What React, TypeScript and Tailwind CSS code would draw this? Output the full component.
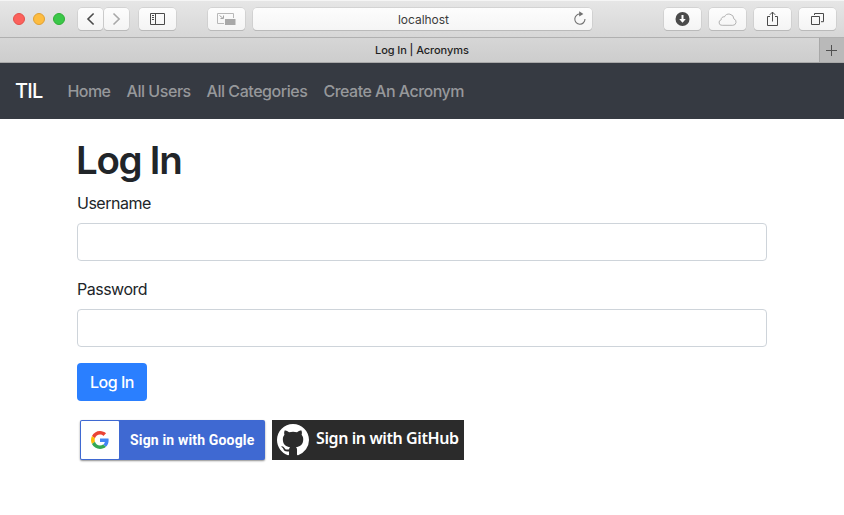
import type { ReactNode } from 'react';

function ToolButton({ children, className = '' }: { children?: ReactNode; className?: string }) {
  return (
    <button
      className={`flex h-[22px] items-center justify-center rounded-[4px] bg-linear-to-b from-[#fdfdfd] to-[#f4f4f4] shadow-[0_0_0_0.5px_#c4c4c4,0_1px_0.5px_#b0b0b0] ${className}`}
    >
      {children}
    </button>
  );
}

function Toolbar() {
  return (
    <header className="flex h-[38px] items-start border-t border-b border-t-[#f5f5f5] border-b-[#b0b0b0] bg-linear-to-b from-[#e6e6e6] to-[#d7d7d7] pt-[7px] pl-[13px]">
      <div className="flex h-[22px] items-center gap-2">
        <span className="size-3 rounded-full border border-[#e2514b] bg-[#fc615c]" />
        <span className="size-3 rounded-full border border-[#dea034] bg-[#fdbc40]" />
        <span className="size-3 rounded-full border border-[#2fae35] bg-[#3ac748]" />
      </div>
      <ToolButton className="ml-[13px] w-[25px]">
        <svg width="25" height="22" fill="none" stroke="#4a4a4a" strokeWidth="1.6">
          <path d="M15.6 5.5 10 11l5.6 5.5" />
        </svg>
      </ToolButton>
      <ToolButton className="ml-px w-[25px]">
        <svg width="25" height="22" fill="none" stroke="#a8a8a8" strokeWidth="1.6">
          <path d="m9.5 5.5 5.6 5.5-5.6 5.5" />
        </svg>
      </ToolButton>
      <ToolButton className="ml-[10px] w-[37px]">
        <svg width="15" height="12" fill="none" stroke="#4a4a4a">
          <path d="M.5.5h14v11H.5zM5.5.5v11M2 2.5h2M2 4.5h2M2 6.5h2" />
        </svg>
      </ToolButton>
      <ToolButton className="ml-8 w-[37px]">
        <svg width="19" height="12" fill="none" stroke="#b8b8b8">
          <path d="M7 10.5H.5V.5h16V5" />
          <path d="M2.5 2.5 5.8 5M3.5 5.5h3v-3" stroke="#a4a4a4" />
          <path d="M8 6h10.5v6H8z" fill="#a8a8a8" stroke="none" />
        </svg>
      </ToolButton>
      <div className="ml-2 flex h-[22px] w-[339px] items-center rounded-[4px] bg-linear-to-b from-[#fdfdfd] to-[#f5f5f5] pl-[145px] shadow-[0_0_0_0.5px_#c4c4c4,0_1px_0.5px_#b0b0b0]">
        <span className="w-[52px] pt-px text-[12px] leading-[22px] tracking-[-0.04px] whitespace-nowrap text-[#3c3c3c]">localhost</span>
        <svg width="14" height="16" className="ml-[123px]" fill="none" stroke="#707070" strokeWidth="1.1">
          <path d="M7.2 3A5.1 5.1 0 1 0 12 8.1" />
          <path d="M6.2.2 10.4 3 6.2 5.6z" fill="#707070" stroke="none" />
        </svg>
      </div>
      <div className="ml-[72px] flex gap-2">
        <ToolButton className="w-[37px]">
          <svg width="15" height="14">
            <circle cx="7.5" cy="7" r="7" fill="#4b4b4b" />
            <path d="M6.5 3h2v4h2.3L7.5 10.8 4.2 7h2.3z" fill="#fff" />
          </svg>
        </ToolButton>
        <ToolButton className="w-[37px]">
          <svg width="19" height="13" fill="none" stroke="#b2b2b2">
            <path d="M4.2 12.3h10.6a3.3 3.3 0 0 0 1.1-6.4A5 5 0 0 0 6.4 3.9 2.6 2.6 0 0 0 3.2 6.8a2.8 2.8 0 0 0 1 5.5Z" />
          </svg>
        </ToolButton>
        <ToolButton className="w-[37px]">
          <svg width="13" height="16" fill="none" stroke="#4a4a4a" className="-mt-px">
            <path d="M4 5.5H1.5v9h10v-9H9M6.5 10.5V1.2M3.8 3.8l2.7-2.7 2.7 2.7" />
          </svg>
        </ToolButton>
        <ToolButton className="w-[37px]">
          <svg width="13" height="12" fill="none" stroke="#4a4a4a">
            <path d="M.5 3.5h8v8h-8zM3.5 2V.5h9v8.2H10" />
          </svg>
        </ToolButton>
      </div>
    </header>
  );
}

function TabBar() {
  return (
    <div className="flex h-[25px] border-b border-b-[#a9a9a9] bg-linear-to-b from-[#d6d6d6] to-[#cdcdcd]">
      <div className="flex flex-1 pl-[375px]">
        <span className="text-[11px] leading-6 font-medium tracking-[-0.08px] text-[#1f1f1f]">Log In | Acronyms</span>
      </div>
      <button className="flex w-[25px] items-center justify-center border-l border-l-[#a8a8a8] bg-[#b9b9b9] pr-px">
        <svg width="11" height="11" stroke="#505050">
          <path d="M5.5 0v11M0 5.5h11" />
        </svg>
      </button>
    </div>
  );
}

function NavBar() {
  return (
    <nav className="flex h-14 items-center bg-[#363a42] pl-[15px] whitespace-nowrap">
      <a className="w-[52.5px] text-[20px] leading-[30px] font-medium tracking-[-0.7px] text-white">TIL</a>
      <div className="flex text-[16px] leading-6 font-medium text-[#96989b]">
        <a className="w-[59px] tracking-[-0.6px]">Home</a>
        <a className="w-20 tracking-[-0.45px]">All Users</a>
        <a className="w-[117px] tracking-[-0.45px]">All Categories</a>
        <a className="tracking-[-0.52px]">Create An Acronym</a>
      </div>
    </nav>
  );
}

function Field({ label, type }: { label: string; type: string }) {
  return (
    <div className="mb-4">
      <label className="mb-2 block text-[16px] leading-6 tracking-[-0.5px]">{label}</label>
      <input type={type} className="block h-[38px] w-full rounded-[4px] border border-[#ced4da] bg-white px-3" />
    </div>
  );
}

function GoogleButton() {
  return (
    <button className="flex h-10 w-[185px] items-center rounded-[2px] bg-[#3f69d2] p-px shadow-[0_1px_2px_rgba(0,0,0,0.45)]">
      <span className="flex h-[38px] w-[38px] items-center justify-center rounded-[1px] bg-white">
        <svg width="18" height="18" viewBox="0 0 48 48">
          <path fill="#EA4335" d="M24 9.5c3.54 0 6.71 1.22 9.21 3.6l6.85-6.85C35.9 2.38 30.47 0 24 0 14.62 0 6.51 5.38 2.56 13.22l7.98 6.19C12.43 13.72 17.74 9.5 24 9.5z" />
          <path fill="#4285F4" d="M46.98 24.55c0-1.57-.15-3.09-.38-4.55H24v9.02h12.94c-.58 2.96-2.26 5.48-4.78 7.18l7.73 6c4.51-4.18 7.09-10.36 7.09-17.65z" />
          <path fill="#FBBC05" d="M10.53 28.59c-.48-1.45-.76-2.99-.76-4.59s.27-3.14.76-4.59l-7.98-6.19C.92 16.46 0 20.12 0 24c0 3.88.92 7.54 2.56 10.78l7.97-6.19z" />
          <path fill="#34A853" d="M24 48c6.48 0 11.93-2.13 15.89-5.81l-7.73-6c-2.15 1.45-4.92 2.3-8.16 2.3-6.26 0-11.57-4.22-13.47-9.91l-7.98 6.19C6.51 42.62 14.62 48 24 48z" />
        </svg>
      </span>
      <span className="ml-[11px] font-['Roboto',sans-serif] text-[14px] leading-5 font-bold tracking-[0.16px] whitespace-nowrap text-white">
        Sign in with Google
      </span>
    </button>
  );
}

function GitHubButton() {
  return (
    <button className="flex h-10 w-48 items-center bg-[#2b2b2b] pl-[5px]">
      <svg width="32" height="32" viewBox="0 0 16 16" fill="#fff">
        <path d="M8 0C3.58 0 0 3.58 0 8c0 3.54 2.29 6.53 5.47 7.59.4.07.55-.17.55-.38 0-.19-.01-.82-.01-1.49-2.01.37-2.53-.49-2.69-.94-.09-.23-.48-.94-.82-1.13-.28-.15-.68-.52-.01-.53.63-.01 1.08.58 1.23.82.72 1.21 1.87.87 2.33.66.07-.52.28-.87.51-1.07-1.78-.2-3.64-.89-3.64-3.95 0-.87.31-1.59.82-2.15-.08-.2-.36-1.02.08-2.12 0 0 .67-.21 2.2.82.64-.18 1.32-.27 2-.27s1.36.09 2 .27c1.53-1.04 2.2-.82 2.2-.82.44 1.1.16 1.92.08 2.12.51.56.82 1.27.82 2.15 0 3.07-1.87 3.75-3.65 3.95.29.25.54.73.54 1.48 0 1.07-.01 1.93-.01 2.2 0 .21.15.46.55.38A8.01 8.01 0 0 0 16 8c0-4.42-3.58-8-8-8Z" />
      </svg>
      <span className="mb-[4px] ml-[7px] font-['Noto_Sans',sans-serif] text-[16px] leading-5 font-semibold tracking-[-0.4px] whitespace-nowrap text-white">
        Sign in with GitHub
      </span>
    </button>
  );
}

export default function App() {
  return (
    <div className="h-[515px] w-[844px] overflow-hidden bg-white font-['Inter','Liberation_Sans',sans-serif] text-[#212529]">
      <Toolbar />
      <TabBar />
      <NavBar />
      <main className="mx-auto w-[690px] pt-4">
        <h1 className="-ml-px mb-[7px] pt-px text-[38.5px] leading-[48px] font-semibold tracking-[-1.3px]">Log In</h1>
        <form>
          <Field label="Username" type="text" />
          <Field label="Password" type="password" />
          <button type="button" className="block h-[38px] w-[70px] rounded-[4px] bg-[#2a7fff] text-[16px] leading-6 font-medium tracking-[-0.5px] whitespace-nowrap text-white">
            Log In
          </button>
        </form>
        <div className="mt-[19px] ml-[3px] flex gap-[7px]">
          <GoogleButton />
          <GitHubButton />
        </div>
      </main>
    </div>
  );
}
